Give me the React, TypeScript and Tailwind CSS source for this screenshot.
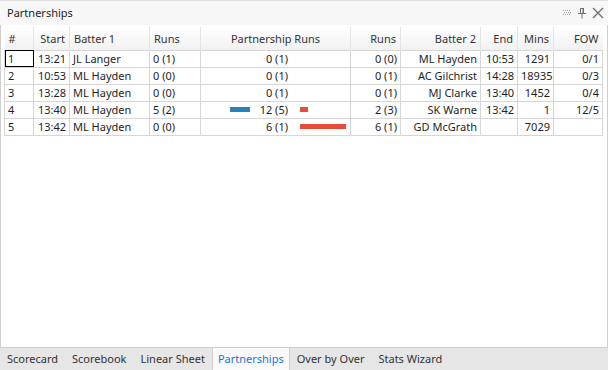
const rows = [
  { n: '1', start: '13:21', b1: 'JL Langer', r1: '0 (1)', pr: '0 (1)', blue: 0, red: 0, r2: '0 (0)', b2: 'ML Hayden', end: '10:53', mins: '1291', fow: '0/1' },
  { n: '2', start: '10:53', b1: 'ML Hayden', r1: '0 (0)', pr: '0 (1)', blue: 0, red: 0, r2: '0 (1)', b2: 'AC Gilchrist', end: '14:28', mins: '18935', fow: '0/3' },
  { n: '3', start: '13:28', b1: 'ML Hayden', r1: '0 (0)', pr: '0 (1)', blue: 0, red: 0, r2: '0 (1)', b2: 'MJ Clarke', end: '13:40', mins: '1452', fow: '0/4' },
  { n: '4', start: '13:40', b1: 'ML Hayden', r1: '5 (2)', pr: '12 (5)', blue: 20, red: 8, r2: '2 (3)', b2: 'SK Warne', end: '13:42', mins: '1', fow: '12/5' },
  { n: '5', start: '13:42', b1: 'ML Hayden', r1: '0 (0)', pr: '6 (1)', blue: 0, red: 46, r2: '6 (1)', b2: 'GD McGrath', end: '', mins: '7029', fow: '' },
];

const tabs = ['Scorecard', 'Scorebook', 'Linear Sheet', 'Partnerships', 'Over by Over', 'Stats Wizard'];

const th = 'h-[23px] border-r border-[#e3e3e3] px-[4px] pt-[2px] font-normal text-[#333]';
const td = 'h-[17px] border border-[#d6d6d6] px-[3px] leading-[16px]';

export default function App() {
  return (
    <div className="w-[608px] h-[370px] flex flex-col bg-white text-[11px] text-[#1e1e1e] overflow-hidden" style={{ fontFamily: '"Noto Sans", "Open Sans", sans-serif' }}>
      <div className="h-[25px] flex items-center justify-between pl-[7px] pr-[4px] bg-[#f7f7f7] border-t border-[#e0e0e0]">
        <span className="text-[11px] text-[#222]">Partnerships</span>
        <div className="flex items-center gap-[5px] text-[#7a7a7a]">
          <svg width="9" height="6" viewBox="0 0 9 6" fill="#a8a8a8">
            <rect x="0" y="0" width="1" height="1" /><rect x="2" y="0" width="1" height="1" /><rect x="4" y="0" width="1" height="1" /><rect x="6" y="0" width="1" height="1" />
            <rect x="1" y="2" width="1" height="1" /><rect x="3" y="2" width="1" height="1" /><rect x="5" y="2" width="1" height="1" /><rect x="7" y="2" width="1" height="1" />
            <rect x="0" y="4" width="1" height="1" /><rect x="2" y="4" width="1" height="1" /><rect x="4" y="4" width="1" height="1" /><rect x="6" y="4" width="1" height="1" />
          </svg>
          <svg width="10" height="12" viewBox="0 0 10 12" fill="none" stroke="#6e6e6e" strokeWidth="1">
            <path d="M3 1.5h4M3.5 1.5v5M6.5 1.5v5M1 6.5h8M5 6.5v5" />
            <rect x="5.5" y="1.5" width="1" height="5" fill="#6e6e6e" stroke="none" />
          </svg>
          <svg width="12" height="12" viewBox="0 0 12 12" stroke="#6e6e6e" strokeWidth="1.3">
            <path d="M1 1l10 10M11 1L1 11" />
          </svg>
        </div>
      </div>

      <div className="flex-1 border-x border-b border-[#cfcfcf] pl-[3px] pt-[2px]">
        <table className="border-collapse table-fixed w-[598px]">
          <colgroup>
            <col className="w-[29px]" /><col className="w-[36px]" /><col className="w-[80px]" /><col className="w-[51px]" />
            <col className="w-[150px]" /><col className="w-[50px]" /><col className="w-[80px]" /><col className="w-[37px]" />
            <col className="w-[36px]" /><col className="w-[49px]" />
          </colgroup>
          <thead>
            <tr className="bg-gradient-to-b from-white to-[#f1f1f1]">
              <th className={`${th} text-left`}>#</th>
              <th className={`${th} text-right`}>Start</th>
              <th className={`${th} text-left`}>Batter 1</th>
              <th className={`${th} text-left`}>Runs</th>
              <th className={`${th} text-center`}>Partnership Runs</th>
              <th className={`${th} text-right`}>Runs</th>
              <th className={`${th} text-right`}>Batter 2</th>
              <th className={`${th} text-right`}>End</th>
              <th className={`${th} text-right`}>Mins</th>
              <th className={`${th} text-right border-r-0`}>FOW</th>
            </tr>
          </thead>
          <tbody>
            {rows.map((r, i) => (
              <tr key={r.n}>
                <td className={`${td} text-left ${i === 0 ? 'outline outline-[1px] -outline-offset-1 outline-black' : ''}`}>{r.n}</td>
                <td className={`${td} text-right`}>{r.start}</td>
                <td className={`${td} text-left`}>{r.b1}</td>
                <td className={`${td} text-left`}>{r.r1}</td>
                <td className={`${td} p-0`}>
                  <div className="flex items-center h-[16px]">
                    <div className="w-[46px] flex justify-end">
                      {r.blue > 0 && <div className="h-[5px] bg-[#2a80b9]" style={{ width: r.blue }} />}
                    </div>
                    <div className="w-[38px] text-right">{r.pr}</div>
                    <div className="w-[12px]" />
                    <div className="flex-1 flex">
                      {r.red > 0 && <div className="h-[5px] bg-[#e74c3c]" style={{ width: r.red }} />}
                    </div>
                  </div>
                </td>
                <td className={`${td} text-right`}>{r.r2}</td>
                <td className={`${td} text-right`}>{r.b2}</td>
                <td className={`${td} text-right`}>{r.end}</td>
                <td className={`${td} text-right`}>{r.mins}</td>
                <td className={`${td} text-right`}>{r.fow}</td>
              </tr>
            ))}
          </tbody>
        </table>
      </div>

      <div className="h-[22px] flex items-stretch bg-[#e6e6e6] text-[11px]">
        {tabs.map((t) => (
          <div
            key={t}
            className={`flex items-center ${t === 'Partnerships' ? 'px-[5px] bg-[#fafafa] text-[#1a76d2] border-x border-[#d0d0d0]' : 'px-[7px] text-[#333]'}`}
          >
            {t}
          </div>
        ))}
      </div>
    </div>
  );
}
